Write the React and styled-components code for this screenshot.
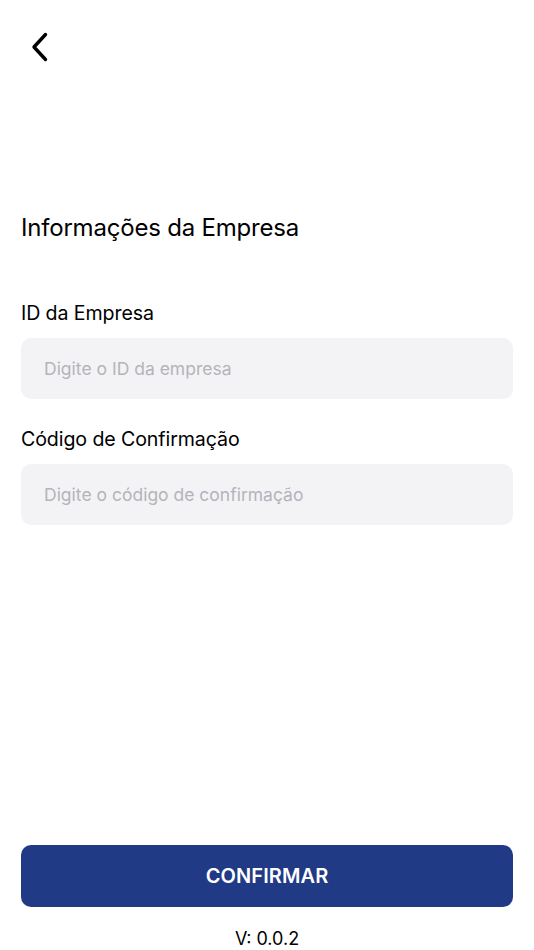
import styled, { createGlobalStyle } from "styled-components";

const Global = createGlobalStyle`
  * { box-sizing: border-box; }
  body {
    margin: 0;
    background: #ffffff;
    font-family: Inter, "Noto Sans", "Liberation Sans", sans-serif;
    color: #000000;
  }
`;

const Screen = styled.div`
  height: 950px;
  display: flex;
  flex-direction: column;
  padding: 0 21px;
`;

const TopBar = styled.div`
  height: 92px;
  display: flex;
  align-items: flex-start;
  padding-top: 31px;
`;

const BackButton = styled.button`
  border: none;
  background: none;
  padding: 0;
  margin-left: 4px;
  width: 30px;
  height: 32px;
  display: flex;
  align-items: center;
  justify-content: center;
  cursor: pointer;
`;

const Title = styled.h1`
  margin: 118px 0 0;
  font-size: 24px;
  font-weight: 400;
  line-height: 36px;
  letter-spacing: -0.2px;
`;

const Form = styled.div`
  margin-top: 55px;
  display: flex;
  flex-direction: column;
`;

const Label = styled.label`
  font-size: 19.6px;
  line-height: 24px;
  letter-spacing: -0.1px;
  margin-top: ${(p) => (p.$first ? "0" : "28px")};
  margin-bottom: 13px;
`;

const Input = styled.input`
  height: 61px;
  width: 100%;
  border: none;
  outline: none;
  border-radius: 10px;
  background: #f3f3f6;
  padding: 0 23px;
  font-family: inherit;
  font-size: 17.5px;
  color: #000;
  &::placeholder {
    color: #b4b4ba;
  }
`;

const Spacer = styled.div`
  flex: 1;
`;

const Footer = styled.div`
  display: flex;
  flex-direction: column;
  align-items: center;
`;

const PrimaryButton = styled.button`
  width: 100%;
  height: 62px;
  border: none;
  border-radius: 10px;
  background: #213a85;
  color: #ffffff;
  font-family: inherit;
  font-size: 20px;
  font-weight: 600;
  letter-spacing: 0.1px;
  cursor: pointer;
`;

const Version = styled.div`
  margin-top: 21px;
  font-size: 18px;
  line-height: 22px;
`;

export default function App() {
  return (
    <>
      <Global />
      <Screen>
        <TopBar>
          <BackButton aria-label="Voltar">
            <svg width="18" height="30" viewBox="0 0 18 30" fill="none">
              <path
                d="M14.5 2.5 L3 15 L14.5 27.5"
                stroke="#000"
                strokeWidth="3.4"
                strokeLinecap="round"
                strokeLinejoin="round"
              />
            </svg>
          </BackButton>
        </TopBar>
        <Title>Informações da Empresa</Title>
        <Form>
          <Label $first>ID da Empresa</Label>
          <Input placeholder="Digite o ID da empresa" />
          <Label>Código de Confirmação</Label>
          <Input placeholder="Digite o código de confirmação" />
        </Form>
        <Spacer />
        <Footer>
          <PrimaryButton>CONFIRMAR</PrimaryButton>
          <Version>V: 0.0.2</Version>
        </Footer>
      </Screen>
    </>
  );
}
